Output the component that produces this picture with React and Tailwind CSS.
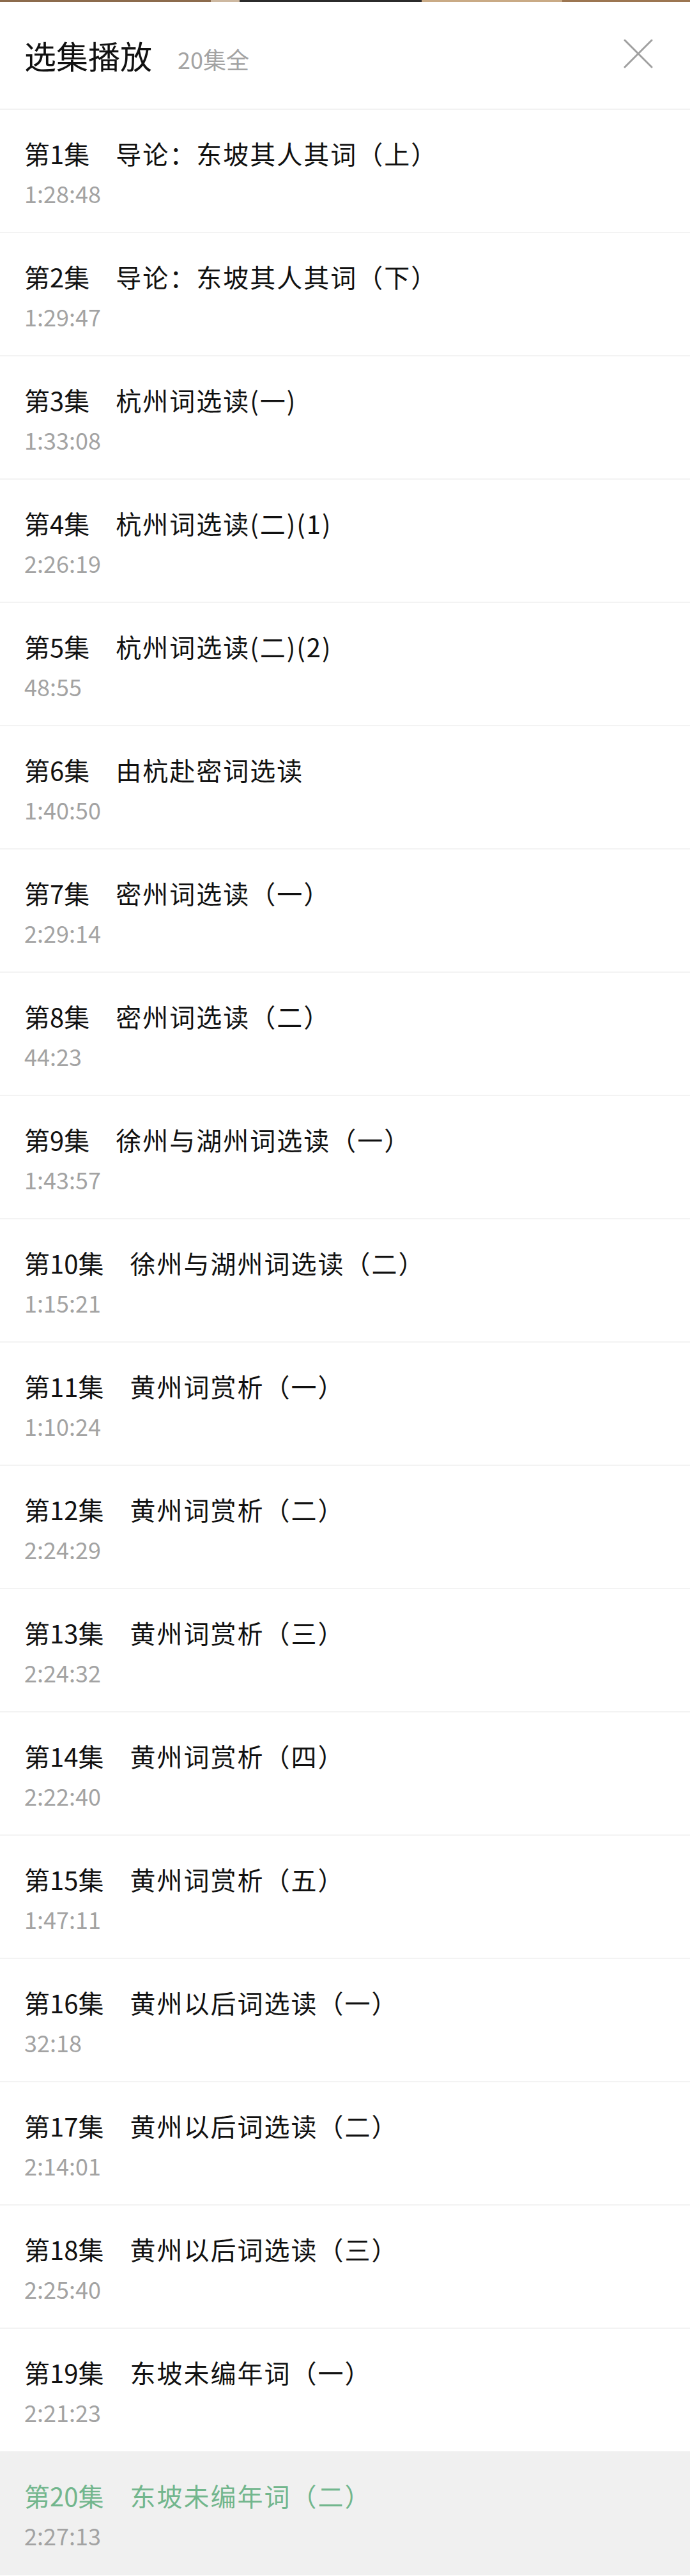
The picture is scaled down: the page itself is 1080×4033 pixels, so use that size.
import React from "react";

const episodes = [
  ["导论：东坡其人其词（上）", "1:28:48"],
  ["导论：东坡其人其词（下）", "1:29:47"],
  ["杭州词选读(一)", "1:33:08"],
  ["杭州词选读(二)(1)", "2:26:19"],
  ["杭州词选读(二)(2)", "48:55"],
  ["由杭赴密词选读", "1:40:50"],
  ["密州词选读（一）", "2:29:14"],
  ["密州词选读（二）", "44:23"],
  ["徐州与湖州词选读（一）", "1:43:57"],
  ["徐州与湖州词选读（二）", "1:15:21"],
  ["黄州词赏析（一）", "1:10:24"],
  ["黄州词赏析（二）", "2:24:29"],
  ["黄州词赏析（三）", "2:24:32"],
  ["黄州词赏析（四）", "2:22:40"],
  ["黄州词赏析（五）", "1:47:11"],
  ["黄州以后词选读（一）", "32:18"],
  ["黄州以后词选读（二）", "2:14:01"],
  ["黄州以后词选读（三）", "2:25:40"],
  ["东坡未编年词（一）", "2:21:23"],
  ["东坡未编年词（二）", "2:27:13"],
];

const font = { fontFamily: '"Noto Sans CJK SC", "Noto Sans", sans-serif' };

export default function App() {
  return (
    <div className="w-[1080px] bg-white min-h-[4033px]" style={font}>
      {/* header */}
      <div className="flex flex-col border-b-2 border-[#f2f2f2]">
        <div className="flex h-[3px]">
          <div className="w-[330px] bg-[#8c6b4c]" />
          <div className="w-[45px] bg-[#cdb8a0]" />
          <div className="w-[285px] bg-[#2b2b2b]" />
          <div className="w-[220px] bg-[#c9aa85]" />
          <div className="flex-1 bg-[#9c7651]" />
        </div>
        <div className="h-[167px] flex items-center justify-between pl-[38px] pr-[58px]">
          <div className="flex items-baseline gap-[40px] -mt-[2px]">
            <span className="text-[50px] leading-[60px] text-[#111111]">选集播放</span>
            <span className="text-[36px] leading-[44px] text-[#a3a3a3]">20集全</span>
          </div>
          <svg width="46" height="46" viewBox="0 0 46 46" className="-mt-[6px]">
            <path d="M2 2 L44 44 M44 2 L2 44" stroke="#a0a0a0" strokeWidth="3" strokeLinecap="round" />
          </svg>
        </div>
      </div>
      {/* list */}
      <div className="flex flex-col">
        {episodes.map(([title, time], i) => {
          const active = i === episodes.length - 1;
          return (
            <div
              key={i}
              className={
                active
                  ? "h-[193px] box-border pl-[38px] pt-[44px] bg-[#f0f0f0]"
                  : "h-[193px] box-border pl-[38px] pt-[44px] border-b-2 border-[#f3f3f3]"
              }
            >
              <div
                className={
                  active
                    ? "flex text-[40px] leading-[48px] text-[#72b68d] whitespace-nowrap"
                    : "flex text-[40px] leading-[48px] text-[#111111] whitespace-nowrap"
                }
              >
                <span>第{i + 1}集</span>
                <span className="ml-[41px] tracking-[2px]">{title}</span>
              </div>
              <div className="mt-[16px] text-[36px] leading-[44px] text-[#a3a3a3]">{time}</div>
            </div>
          );
        })}
      </div>
    </div>
  );
}
